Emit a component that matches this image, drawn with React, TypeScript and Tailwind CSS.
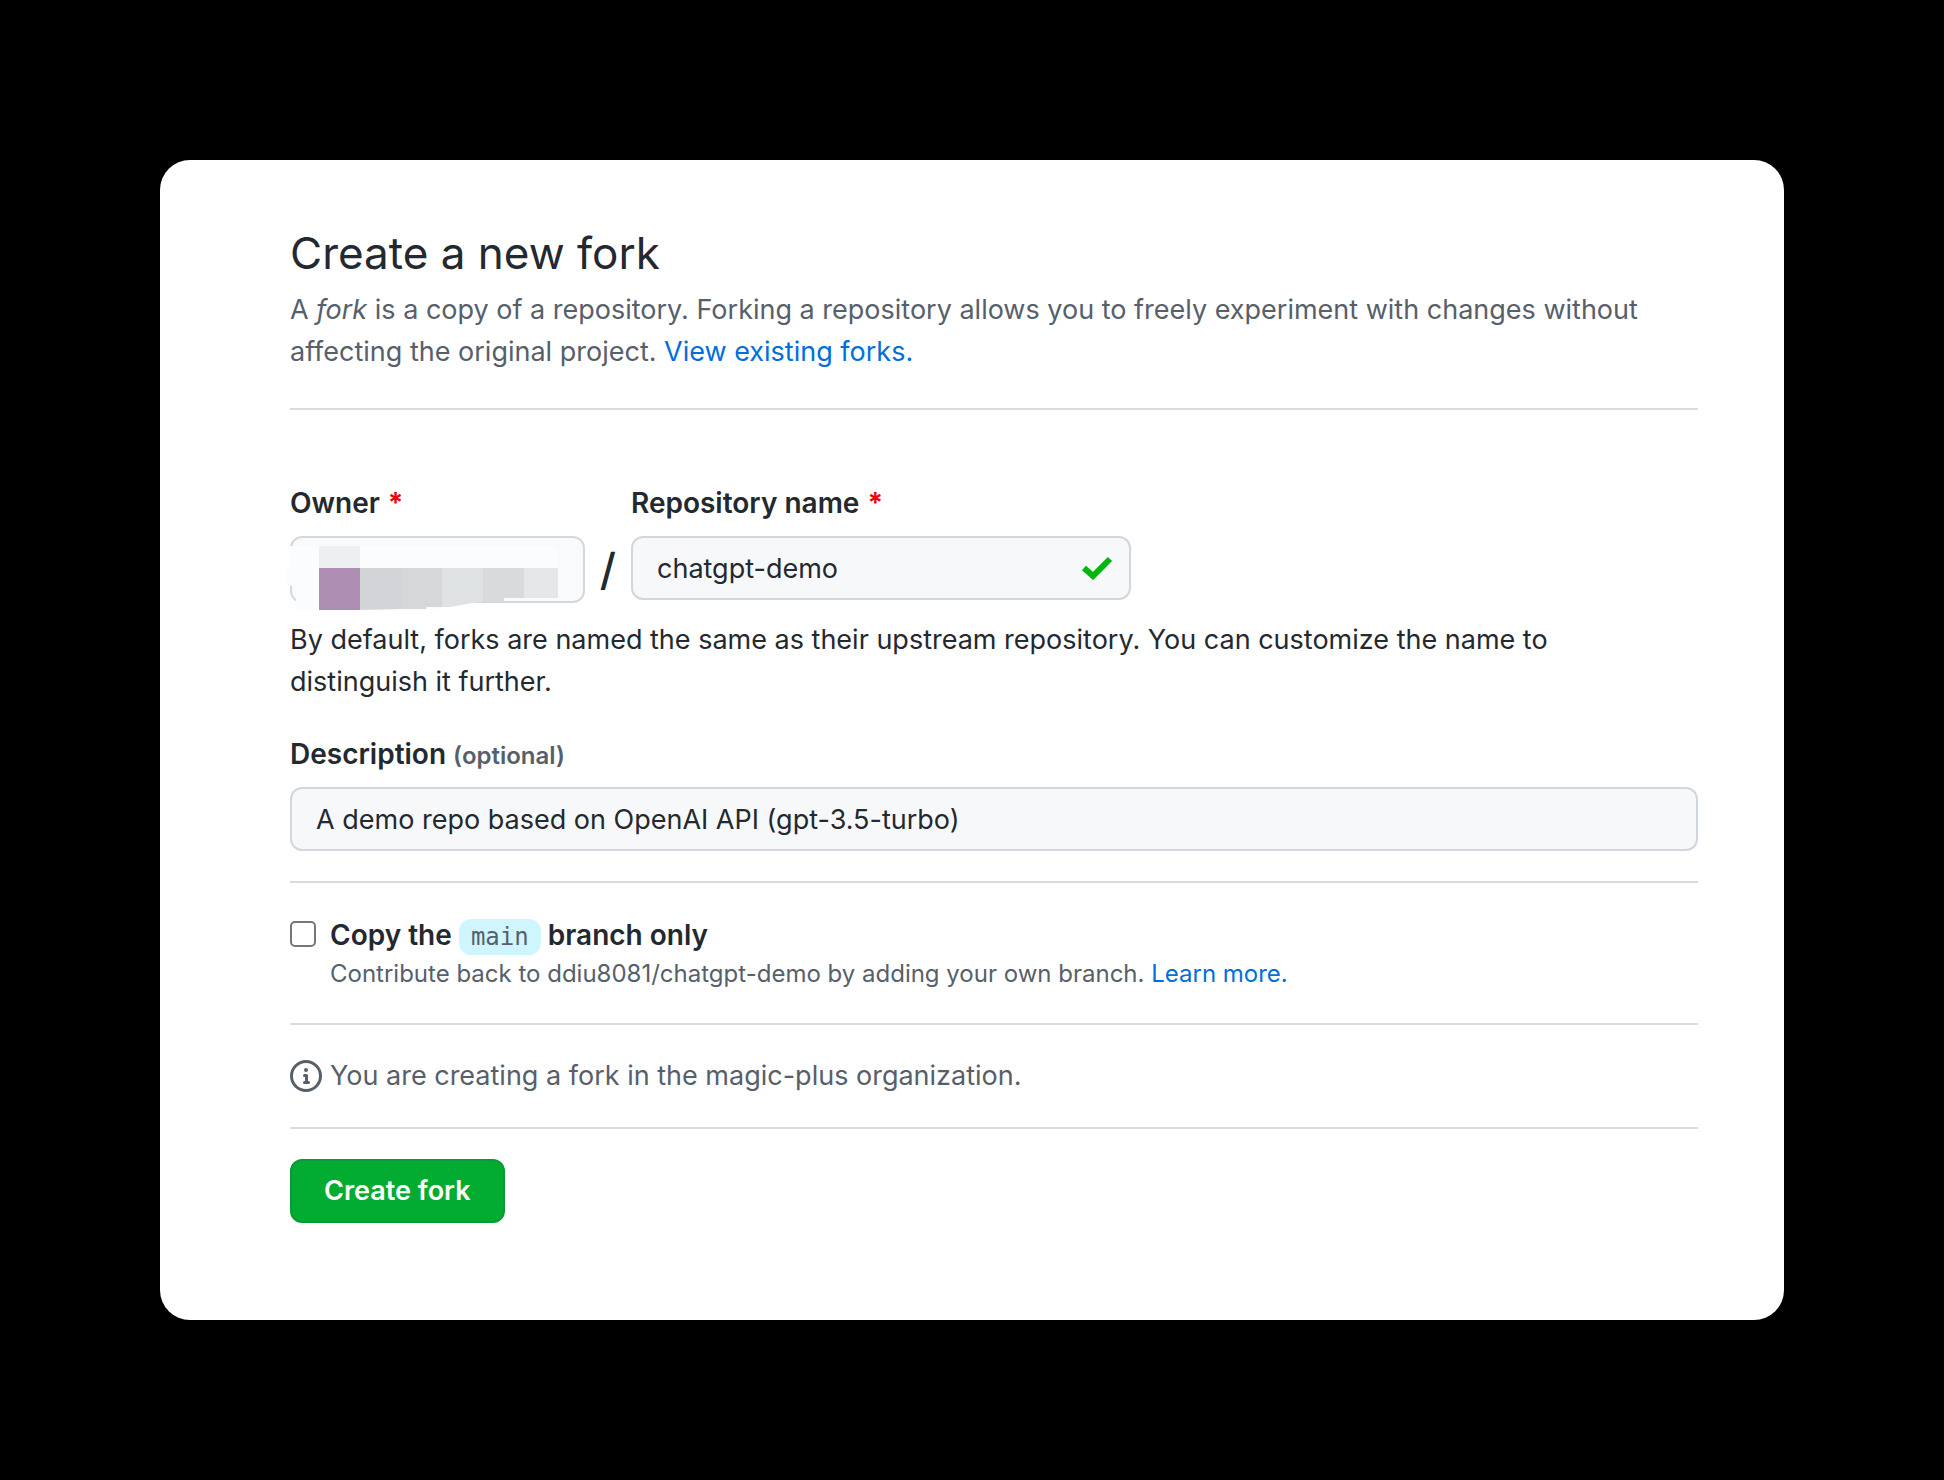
import type { ReactNode } from "react";

function Required() {
  return <span className="ml-2 font-bold text-[#f0000f]">*</span>;
}

function Divider() {
  return <hr className="border-t-2 border-[#d8dce0]" />;
}

function Label({ htmlFor, children }: { htmlFor: string; children: ReactNode }) {
  return (
    <label htmlFor={htmlFor} className="mb-3 block text-[28px] font-semibold">
      {children}
    </label>
  );
}

function OwnerMosaic() {
  return (
    <svg
      className="pointer-events-none absolute -left-1 top-0 h-[76px] w-[290px]"
      viewBox="0 0 290 76"
      aria-hidden="true"
    >
      <path d="M4 10H272V62H218V65H197L164 71L136 75H10V50H0V32H4Z" fill="#fafcfd" />
      <rect x="33" y="10" width="41" height="22" fill="#eeeff1" />
      <rect x="33" y="32" width="41" height="42" fill="#ae8fb3" />
      <path d="M74 32H115V73L74 74Z" fill="#d3d4d8" />
      <path d="M115 32H156V71H140V73H115Z" fill="#d5d7d9" />
      <path d="M156 32H197V65L164 71H156Z" fill="#dee2e3" />
      <path d="M197 32H238V62H218V65H197Z" fill="#d8dadb" />
      <rect x="238" y="32" width="34" height="30" fill="#e4e6e7" />
    </svg>
  );
}

export default function App() {
  return (
    <main className="min-h-screen bg-black p-40 font-['Inter','Liberation_Sans',sans-serif] text-[27px] leading-[42px] text-[#24292f]">
      <form
        className="rounded-[30px] bg-white pb-[97px] pl-[130px] pr-[86px] pt-[61px]"
        onSubmit={(e) => e.preventDefault()}
      >
        <h1 className="mb-1 text-[44px] leading-[64px]">Create a new fork</h1>
        <p className="mb-[35px] text-[#57606a]">
          A <em>fork</em> is a copy of a repository. Forking a repository allows you to freely
          experiment with changes without affecting the original project.{" "}
          <a href="#forks" className="text-[#006edb]">
            View existing forks.
          </a>
        </p>
        <Divider />

        <div className="mt-[72px] flex items-start">
          <div className="w-[295px]">
            <Label htmlFor="owner">
              Owner
              <Required />
            </Label>
            <div className="relative">
              <button
                id="owner"
                type="button"
                aria-label="Owner"
                className="block h-[67px] w-full rounded-xl border-2 border-[#d5d8da] bg-[#f9fafb]"
              />
              <OwnerMosaic />
            </div>
          </div>
          <span className="mt-[54px] w-[46px] text-center text-[44px] font-medium leading-[66px]">
            /
          </span>
          <div className="w-[500px]">
            <Label htmlFor="repo">
              Repository name
              <Required />
            </Label>
            <div className="relative">
              <input
                id="repo"
                defaultValue="chatgpt-demo"
                className="block h-16 w-full rounded-xl border-2 border-[#d0d7de] bg-[#f6f8fa] px-6"
              />
              <svg
                className="pointer-events-none absolute right-[18px] top-5 h-6 w-8"
                viewBox="0 0 32 24"
                aria-hidden="true"
              >
                <path d="M3 12L12 20L29 3" fill="none" stroke="#00b50c" strokeWidth="6" />
              </svg>
            </div>
          </div>
        </div>

        <p className="mt-4 pr-10">
          By default, forks are named the same as their upstream repository. You can customize the
          name to distinguish it further.
        </p>

        <div className="my-[30px]">
          <Label htmlFor="description">
            Description <span className="text-2xl text-[#57606a]">(optional)</span>
          </Label>
          <input
            id="description"
            defaultValue="A demo repo based on OpenAI API (gpt-3.5-turbo)"
            className="block h-16 w-full rounded-xl border-2 border-[#d0d7de] bg-[#f6f8fa] px-6"
          />
        </div>
        <Divider />

        <div className="flex items-start py-[31px]">
          <input
            id="copy"
            type="checkbox"
            className="mr-3.5 mt-[7px] size-[26px] shrink-0 appearance-none rounded-[5px] border-2 border-[#767676] bg-white"
          />
          <div>
            <label htmlFor="copy" className="block text-[28px] font-semibold">
              Copy the{" "}
              <code className="rounded-xl bg-[#cff6ff] px-3 py-1 font-['DejaVu_Sans_Mono',monospace] text-2xl leading-9 font-normal text-[#57606a]">
                main
              </code>{" "}
              branch only
            </label>
            <p className="text-2xl leading-9 text-[#57606a]">
              Contribute back to ddiu8081/chatgpt-demo by adding your own branch.{" "}
              <a href="#learn" className="text-[#006edb]">
                Learn more.
              </a>
            </p>
          </div>
        </div>
        <Divider />

        <p className="flex items-center gap-2 py-[30px] text-[#57606a]">
          <svg className="size-8" viewBox="0 0 16 16" fill="currentColor" aria-hidden="true">
            <path d="M8 1.5a6.5 6.5 0 100 13 6.5 6.5 0 000-13zM0 8a8 8 0 1116 0A8 8 0 010 8zm6.5-.25A.75.75 0 017.25 7h1a.75.75 0 01.75.75v2.75h.25a.75.75 0 010 1.5h-2a.75.75 0 010-1.5h.25v-2h-.25a.75.75 0 01-.75-.75zM8 6a1 1 0 100-2 1 1 0 000 2z" />
          </svg>
          You are creating a fork in the magic-plus organization.
        </p>
        <Divider />

        <button
          type="submit"
          className="mt-[30px] block h-16 rounded-xl border-2 border-[#0b9a35] bg-[#02ac31] px-8 text-[27px] font-semibold text-white"
        >
          Create fork
        </button>
      </form>
    </main>
  );
}
